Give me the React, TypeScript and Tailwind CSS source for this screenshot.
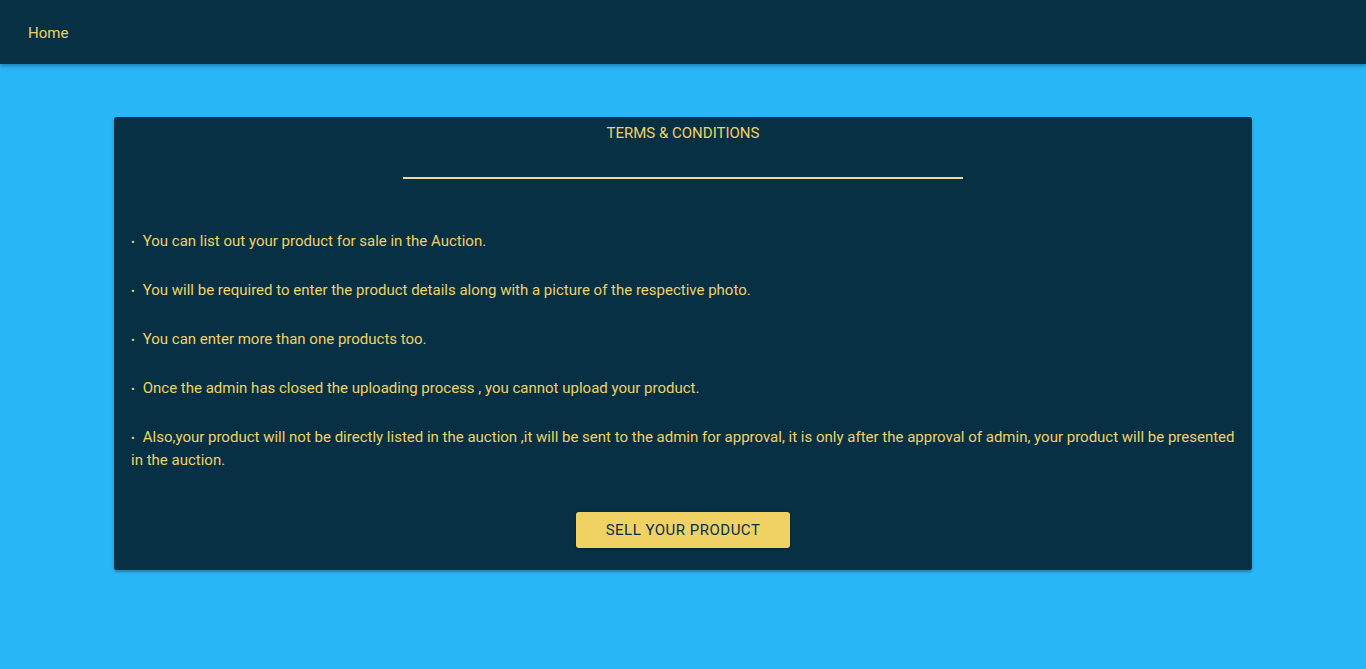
const terms = [
  'You can list out your product for sale in the Auction.',
  'You will be required to enter the product details along with a picture of the respective photo.',
  'You can enter more than one products too.',
  'Once the admin has closed the uploading process , you cannot upload your product.',
  'Also,your product will not be directly listed in the auction ,it will be sent to the admin for approval, it is only after the approval of admin, your product will be presented in the auction.',
]

export default function App() {
  return (
    <div className="min-h-[669px] bg-[#29b6f6] font-['Roboto',sans-serif]">
      <header className="flex h-16 items-center bg-[#073045] px-7 pt-[2px] shadow-[0_2px_4px_rgba(0,0,0,0.3)]">
        <a className="text-[15px] text-[#f0d264]">Home</a>
      </header>

      <main className="px-[114px] pt-[53px]">
        <div className="rounded-[3px] bg-[#073045] px-[17px] pb-[22px] pt-[6px] shadow-[0_2px_3px_rgba(0,0,0,0.3)]">
          <h2 className="text-center text-[15px] leading-5 text-[#f0d264]">TERMS &amp; CONDITIONS</h2>
          <div className="mx-auto mt-[34px] h-[2px] w-[560px] bg-[#f0d8a0]" />

          <ul className="mt-[51px] flex flex-col gap-[26px]">
            {terms.map((t) => (
              <li key={t} className="text-[15px] leading-[23px] text-[#f0d264]">
                <span className="mr-2 text-[11px] leading-none">•</span>
                {t}
              </li>
            ))}
          </ul>

          <div className="mt-[40px] flex justify-center">
            <button className="h-9 w-[214px] rounded-[3px] bg-[#f0d264] text-[15px] tracking-[0.5px] text-[#073045] shadow-[0_1px_3px_rgba(0,0,0,0.3)]">
              SELL YOUR PRODUCT
            </button>
          </div>
        </div>
      </main>
    </div>
  )
}
